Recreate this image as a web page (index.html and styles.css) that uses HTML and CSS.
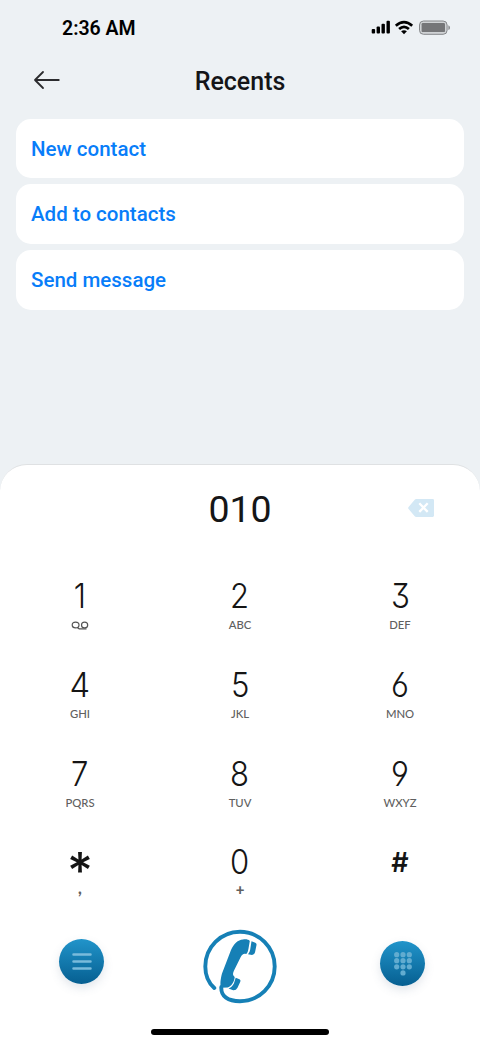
FILE: index.html
```html
<!DOCTYPE html>
<html lang="en">
<head>
<meta charset="utf-8">
<title>Recents</title>
<link rel="stylesheet" href="styles.css">
</head>
<body>
<main class="screen">
  <header class="status">
    <span class="time">2:36 AM</span>
    <svg class="indicators" width="80" height="16" viewBox="0 0 80 16">
      <rect x="0.7" y="9" width="3.4" height="4.5" rx="1"/>
      <rect x="5.6" y="6.5" width="3.4" height="7" rx="1"/>
      <rect x="10.5" y="3.8" width="3.4" height="9.7" rx="1"/>
      <rect x="15.5" y="0.7" width="3.4" height="12.8" rx="1"/>
      <g fill="none" stroke="#000" stroke-width="2.7">
        <path d="M24.8 5.7Q33 -1.4 41.2 5.7"/>
        <path d="M28.1 9.1Q33 4.7 37.9 9.1"/>
      </g>
      <path d="M30.1 11.3Q33 9 35.9 11.3L33 14.2Z"/>
      <rect x="48.5" y="1" width="27.6" height="13.3" rx="4" fill="#d0d3d5" stroke="#85878a"/>
      <rect x="50.6" y="3.1" width="23.4" height="9" rx="1.2" fill="#757678"/>
      <path d="M77.4 5.3Q79 6 79 7.7T77.4 10Z" fill="#85878a"/>
    </svg>
  </header>
  <nav class="titlebar">
    <svg class="back" width="28" height="20" viewBox="0 0 28 20"><path d="M25.8 10H2M10 2L2 10L10 18"/></svg>
    <h1>Recents</h1>
  </nav>
  <section class="actions">
    <div class="card">New contact</div>
    <div class="card">Add to contacts</div>
    <div class="card">Send message</div>
  </section>
  <section class="sheet">
    <div class="entry">
      <span class="number">010</span>
      <svg class="erase" width="28" height="20" viewBox="0 0 28 20">
        <path d="M8.2 1H24.7Q26 1 26 2.3V17.6Q26 18.9 24.7 18.9H8.2Q7.3 18.9 6.7 18.2L.6 11Q-.3 10 .6 9L6.7 1.7Q7.3 1 8.2 1Z" fill="#d3e8f5"/>
        <path d="M11.3 5.3L19.7 13.9M19.7 5.3L11.3 13.9" stroke="#fff" stroke-width="2.3"/>
      </svg>
    </div>
    <div class="keys">
      <div class="key"><span class="digit">1</span><svg class="voicemail" width="18" height="15" viewBox="0 0 18 15"><g fill="none" stroke="#555" stroke-width="1.2"><ellipse cx="4.6" cy="7" rx="3.4" ry="2.9"/><ellipse cx="13.6" cy="7" rx="3.1" ry="2.9"/><path d="M6.3 9.4L8.2 10.8H15.5"/></g></svg></div>
      <div class="key"><span class="digit">2</span><span class="letters">ABC</span></div>
      <div class="key"><span class="digit">3</span><span class="letters">DEF</span></div>
      <div class="key"><span class="digit four">4</span><span class="letters">GHI</span></div>
      <div class="key"><span class="digit">5</span><span class="letters">JKL</span></div>
      <div class="key"><span class="digit">6</span><span class="letters">MNO</span></div>
      <div class="key"><span class="digit">7</span><span class="letters">PQRS</span></div>
      <div class="key"><span class="digit">8</span><span class="letters">TUV</span></div>
      <div class="key"><span class="digit">9</span><span class="letters">WXYZ</span></div>
      <div class="key"><span class="digit star">*</span><span class="letters comma">,</span></div>
      <div class="key"><span class="digit">0</span><span class="letters plus">+</span></div>
      <div class="key"><span class="digit hash">#</span></div>
    </div>
    <footer class="dock">
      <div class="slot"><div class="round menu"><svg width="46" height="46" viewBox="0 0 46 46"><path d="M14.5 15.6H31.5M14.5 22.5H31.5M14.5 29.4H31.5" stroke="#79bbdb" stroke-width="2.5" stroke-linecap="round"/></svg></div></div>
      <div class="slot"><svg class="call" width="80" height="80" viewBox="0 0 80 80">
        <path d="M14.3 62C7.5 56 5.3 47.5 5.3 40.5A34.7 34.7 0 1 1 40 75.2C28 75.2 20.8 70.5 21.3 61" fill="none" stroke="#1680b6" stroke-width="3.9" stroke-linecap="round"/>
        <path d="M43 13.5C46 13.1 48.4 13.5 49.8 14.9L48.5 22.5Q47.7 27.5 46 27.9C43.5 27.2 42 28.5 40.6 31.2L33.8 45C32.5 48 32.8 49.5 34.7 51C34.4 55.5 31.5 60.5 27.5 61.5L21 61.8C19.8 58.5 20.7 52 22 47.5L31 24C34 17.5 37.7 13.9 43 13.5Z" fill="#1680b6"/>
        <path d="M51.5 15.3L55.3 16.7Q56.8 17.4 56.5 19L55.2 25.5Q54.5 28.7 52 28.9L48 28.3Q49.6 27 50.2 23.5Z" fill="#1680b6"/>
        <path d="M35.7 51.8L39.5 53.2Q41 54 40.3 55.7L37.5 61.7Q36 64.6 33.2 64.3L28.5 62.5Q31.8 61.6 33.9 57.5Z" fill="#1680b6"/>
      </svg></div>
      <div class="slot"><div class="round pad"><svg width="46" height="46" viewBox="0 0 46 46"><g fill="#62acd0"><circle cx="16.7" cy="13.7" r="2.6"/><circle cx="23" cy="13.7" r="2.6"/><circle cx="29.3" cy="13.7" r="2.6"/><circle cx="16.7" cy="19.7" r="2.6"/><circle cx="23" cy="19.7" r="2.6"/><circle cx="29.3" cy="19.7" r="2.6"/><circle cx="16.7" cy="25.8" r="2.6"/><circle cx="23" cy="25.8" r="2.6"/><circle cx="29.3" cy="25.8" r="2.6"/><circle cx="23" cy="31.9" r="2.6"/></g></svg></div></div>
    </footer>
    <div class="home"></div>
  </section>
</main>
</body>
</html>
```
FILE: styles.css
```css
* { box-sizing: border-box; }
body { margin: 0; background: #edf1f4; font-family: Roboto, sans-serif; }
svg { display: block; flex: none; }
.screen { width: 480px; height: 1040px; overflow: hidden; display: flex; flex-direction: column; background: #edf1f4; }
.status { height: 56px; padding: 1px 29px 0 62px; display: flex; align-items: center; justify-content: space-between; }
.time { font-size: 19.5px; font-weight: 600; line-height: 24px; color: #000; }
.indicators { margin-bottom: 2px; }
.titlebar { height: 62px; display: grid; grid-template-columns: 80px 1fr 80px; padding-top: 13px; align-items: start; }
.back { margin-left: 33px; margin-top: 1px; fill: none; stroke: #2b2b2e; stroke-width: 1.8; stroke-linecap: round; stroke-linejoin: round; }
h1 { margin: -2px 0 0; font-size: 25px; line-height: 30px; font-weight: 460; color: #141518; text-align: center; }
.actions { display: flex; flex-direction: column; gap: 6px; height: 346px; padding: .5px 16px 0; }
.card { height: 59.7px; flex: none; border-radius: 15px; background: #fff; padding-left: 15px; line-height: 60px; font-size: 20.5px; font-weight: 460; color: #087df9; }
.sheet { flex: 1; background: #fff; border-top: 1px solid #dfe1e3; border-radius: 27px 27px 0 0; }
.entry { height: 87px; padding-left: 80px; display: grid; grid-template-columns: 320px 80px; align-items: center; }
.number { padding-top: 1px; font-size: 37.5px; font-weight: 370; line-height: 44px; text-align: center; color: #151617; }
.erase { margin-left: 8px; margin-bottom: 2px; }
.keys { display: grid; grid-template-columns: repeat(3, 160px); grid-auto-rows: 88.8px; padding-top: 24px; }
.key { display: flex; flex-direction: column; align-items: center; }
.digit { height: 40px; font: 330 34.5px/40px Inter, sans-serif; font-feature-settings: "cv09", "cv03", "cv04"; color: #151515; transform: scaleX(.9); }
.four { transform: scaleX(.95); }
.letters { margin-top: 1px; height: 15px; font: 500 11.3px/15px Lato, sans-serif; color: #606060; }
.voicemail { margin-top: 2px; }
.star { font-weight: 500; font-size: 50px; line-height: 57px; transform: none; }
.hash { font-weight: 600; font-size: 27px; line-height: 41px; transform: none; }
.comma { font-weight: 900; font-size: 16px; line-height: 10px; }
.plus { font-weight: 900; font-size: 15px; line-height: 12px; }
.dock { display: grid; grid-template-columns: repeat(3, 160px); height: 98px; padding-bottom: 28px; }
.slot { display: flex; justify-content: center; align-items: center; }
.call { margin: -5px 0; }
.round { width: 45px; height: 45px; border-radius: 50%; background: linear-gradient(#2194ca, #065f91); box-shadow: 0 4px 10px #64789630; display: grid; place-items: center; }
.menu { margin: 0 0 9px 2px; }
.pad { margin: 0 0 6px 4px; }
.home { width: 178px; height: 6px; margin: 0 auto; border-radius: 3px; background: #000; }
```
